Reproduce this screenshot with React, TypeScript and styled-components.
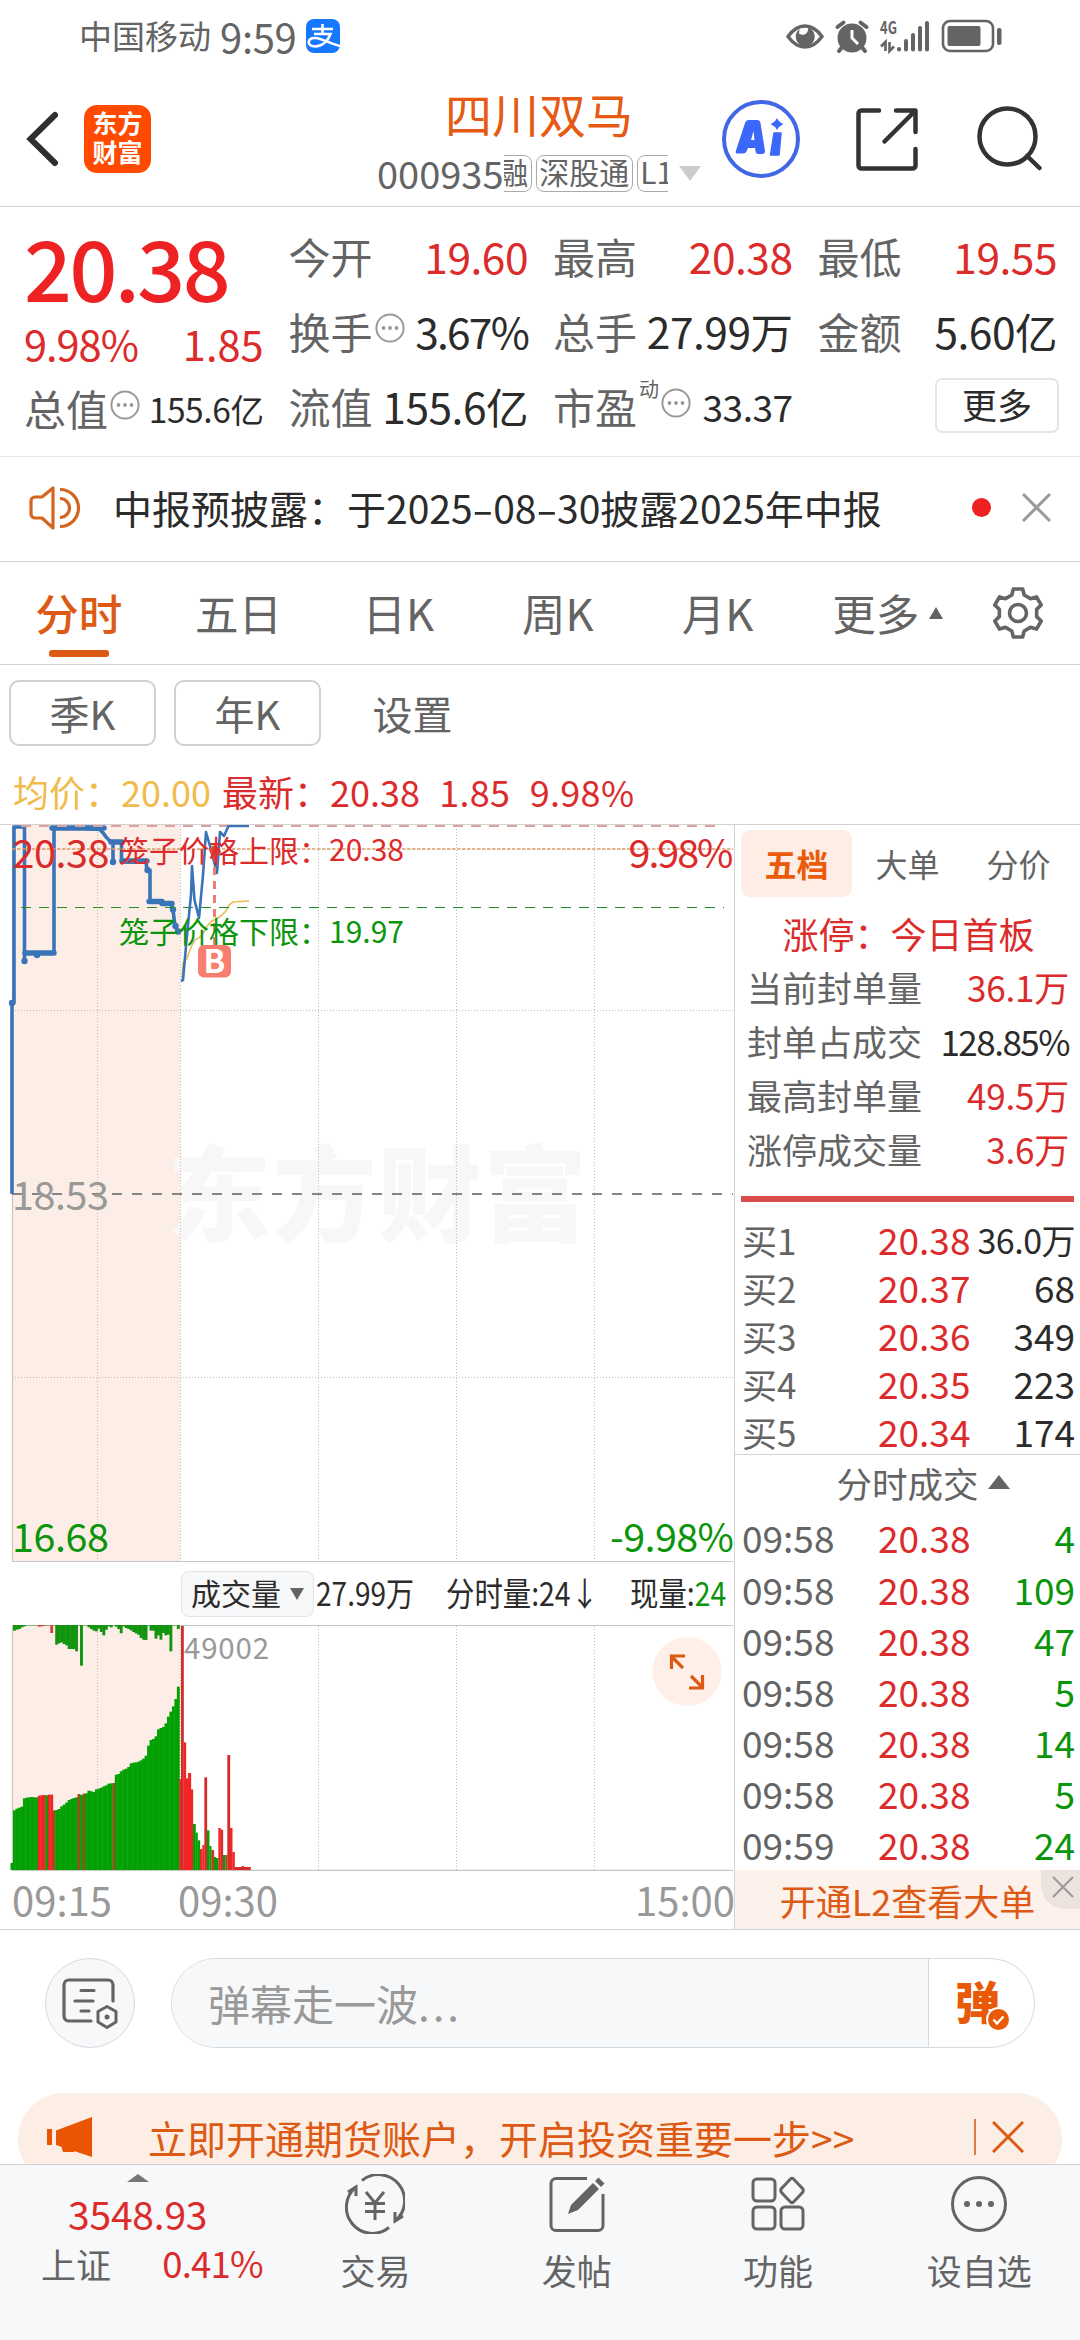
import React from 'react';
import styled, { createGlobalStyle, css } from 'styled-components';

const C = {
  red: '#db2b2b',
  green: '#0a950a',
  orange: '#dc5a14',
  ink: '#2b2b2b',
  grey: '#646464',
  light: '#999999',
  line: '#d2d2d2',
  peach: '#fceee7',
  blue: '#3974b8',
};

const FONT = "'Noto Sans CJK SC', 'Noto Sans', sans-serif";

const GlobalStyle = createGlobalStyle`
  *, *::before, *::after { box-sizing: border-box; }
  html, body { margin: 0; padding: 0; background: #fff; }
  body { font-family: ${FONT}; color: ${C.ink}; width: 1080px; overflow: hidden; }
  svg { display: block; flex: none; }
`;

interface TextProps {
  $size?: number;
  $color?: string;
  $ls?: number;
  $weight?: number;
  $stretch?: number;
}

const Text = styled.span<TextProps>`
  display: inline-block;
  flex: none;
  white-space: pre;
  line-height: 1;
  font-size: ${(p) => p.$size ?? 42}px;
  color: ${(p) => p.$color ?? C.ink};
  font-weight: ${(p) => p.$weight ?? 400};
  letter-spacing: ${(p) => p.$ls ?? 0}px;
  ${(p) =>
    p.$stretch &&
    css`
      transform: scaleX(${p.$stretch});
      transform-origin: left center;
    `}
`;

const Screen = styled.div`
  width: 1080px;
  height: 2340px;
  display: flex;
  flex-direction: column;
  overflow: hidden;
  background: #fff;
`;

/* ---------- status bar ---------- */

const StatusBar = styled.div`
  height: 74px;
  display: flex;
  align-items: center;
  padding: 0 78px 0 79px;
`;
const StatusClock = styled.div`
  display: flex;
  align-items: center;
  gap: 9px;
  flex: 1;
  padding-bottom: 2px;
`;
const PayBadge = styled.div`
  width: 34px;
  height: 34px;
`;
const StatusIcons = styled.div`
  display: flex;
  align-items: center;
  width: 216px;
`;

const PayIcon = () => (
  <svg width="34" height="34" viewBox="0 0 34 34">
    <rect width="34" height="34" rx="8" fill="#1677ff" />
    <path
      d="M6 10h21M16.500 5v10M8 15h16.500C22 22 16 27.500 9 27.500C0 27.500 1 18.500 9 19C17 19.500 23 24.500 34 27"
      stroke="#fff"
      strokeWidth="2.600"
      fill="none"
    />
  </svg>
);

const StatusGlyphs = () => (
  <svg width="216" height="36" viewBox="786 19 216 36">
    <path d="M788 36.500C793 29.500 799 26 805 26s12 3.500 17 10.500C817 43.500 811 47 805 47s-12-3.500-17-10.500z" fill="none" stroke={C.grey} strokeWidth="3.400" />
    <path d="M799.500 29A9.500 9.500 0 1 0 808 27.500C809 33 804 37 799 33.500Z" fill={C.grey} />
    <circle cx="852" cy="38" r="14.500" fill={C.grey} />
    <path d="M837.500 27l6-4.500M866.500 27l-6-4.500M843 46l-4 5M861 46l4 5" stroke={C.grey} strokeWidth="4" strokeLinecap="round" />
    <path d="M852 30v8l6 6" stroke="#fff" strokeWidth="3" fill="none" />
    <text x="880" y="34" fontSize="17.500" fontWeight="700" fill={C.grey} fontFamily={FONT} textLength="17" lengthAdjust="spacingAndGlyphs">4G</text>
    <path d="M885.500 51V42l-4.500 4.500M889.500 42v9l4.500-4.500" stroke={C.grey} strokeWidth="2.600" fill="none" />
    <path d="M899 49v.5M906 41v8.500M913 35v14.500M920 28v21.500M927 23v26.500" stroke={C.grey} strokeWidth="4" strokeLinecap="round" />
    <rect x="943" y="21" width="50" height="30" rx="7" fill="none" stroke={C.grey} strokeWidth="2.600" />
    <rect x="947.500" y="26" width="33" height="20" rx="2" fill={C.grey} />
    <rect x="997" y="28" width="4.500" height="17" rx="2" fill={C.grey} />
  </svg>
);

/* ---------- header ---------- */

const Header = styled.header`
  height: 133px;
  border-bottom: 1.500px solid ${C.line};
  display: flex;
  align-items: flex-start;
  padding-left: 26px;
`;
const AppLogo = styled.div`
  width: 67px;
  height: 68px;
  margin: 31px 0 0 23px;
  border-radius: 13px;
  background: #ff4a00;
  color: #fff;
  display: flex;
  flex-direction: column;
  justify-content: center;
  align-items: center;
  padding-bottom: 3px;
  font-size: 25px;
  font-weight: 700;
  line-height: 29px;
`;
const TitleBlock = styled.div`
  width: 324px;
  margin-left: 226px;
  display: flex;
  flex-direction: column;
  align-items: center;
  padding-top: 15px;
`;
const CodeRow = styled.div`
  display: flex;
  align-items: center;
  width: 324px;
  height: 37px;
  margin-top: 19px;
`;
const ChipScroller = styled.div`
  width: 166px;
  height: 37px;
  display: flex;
  justify-content: center;
  gap: 4px;
  overflow: hidden;
  margin-right: 11px;
`;
const Chip = styled.span`
  flex: none;
  height: 37px;
  border: 1.500px solid #aaa;
  border-radius: 8px;
  padding: 0 2.500px;
  font-size: 30px;
  line-height: 31px;
  color: ${C.grey};
`;
const HeaderIcon = styled.div<{ $ml: number; $mt: number }>`
  margin: ${(p) => p.$mt}px 0 0 ${(p) => p.$ml}px;
`;

/* ---------- quote ---------- */

const Quote = styled.section`
  height: 250px;
  border-bottom: 1.500px solid #e9e9e9;
  display: flex;
  gap: 25px;
  padding: 12px 0 0 24px;
`;
const QuoteCol = styled.div`
  width: 239.500px;
  display: flex;
  flex-direction: column;
`;
const QuoteRow = styled.div<{ $h?: number }>`
  height: ${(p) => p.$h ?? 75}px;
  flex: none;
  display: flex;
  align-items: center;
  justify-content: space-between;
`;
const Key = styled.div`
  display: flex;
  align-items: center;
  gap: 2px;
  font-size: 42px;
  line-height: 1;
  color: ${C.grey};
`;
const Sup = styled.span`
  font-size: 20px;
  align-self: flex-start;
  margin-top: -6px;
`;
const MoreButton = styled.button`
  width: 124px;
  height: 55px;
  margin-right: -2px;
  margin-top: -1px;
  border: 2px solid #e4e6e6;
  border-radius: 7px;
  background: #fff;
  padding: 0 0 4px;
  font: 35px/1 ${FONT};
  color: ${C.ink};
`;

const Dots = () => (
  <svg width="30" height="30" viewBox="0 0 30 30">
    <circle cx="15" cy="15" r="13.600" fill="none" stroke="#999" strokeWidth="2" />
    <circle cx="8.500" cy="15" r="1.900" fill="#999" />
    <circle cx="15" cy="15" r="1.900" fill="#999" />
    <circle cx="21.500" cy="15" r="1.900" fill="#999" />
  </svg>
);
const DotsWrap = styled.span`
  margin-top: -6px;
`;

interface MetricProps {
  label: string;
  value: string;
  up?: boolean;
  info?: boolean;
  sup?: string;
  size?: number;
  tight?: number;
}
const Metric = ({ label, value, up, info, sup, size, tight }: MetricProps) => (
  <QuoteRow>
    <Key>
      {label}
      {sup && <Sup>{sup}</Sup>}
      {info && (
        <DotsWrap>
          <Dots />
        </DotsWrap>
      )}
    </Key>
    <Text $size={size ?? 42.500} $color={up ? C.red : C.ink} $ls={tight ?? -0.5}>
      {value}
    </Text>
  </QuoteRow>
);

/* ---------- news ---------- */

const News = styled.section`
  height: 105px;
  border-bottom: 1.500px solid ${C.line};
  display: flex;
  align-items: center;
  padding: 0 29px 2px 29px;
`;
const NewsText = styled.div`
  flex: 1;
  margin-left: 31px;
  padding-bottom: 1px;
  font-size: 39px;
  line-height: 1;
  white-space: pre;
`;
const Dash = styled.span`
  display: inline-block;
  margin: 0 3.500px;
  transform: scaleX(1.600);
`;
const RedDot = styled.i`
  width: 19px;
  height: 19px;
  border-radius: 50%;
  background: #ee2222;
  margin-right: 31px;
`;

/* ---------- tabs ---------- */

const Tabs = styled.nav`
  height: 104px;
  border-bottom: 1.500px solid ${C.line};
  display: flex;
`;
const Tab = styled.div<{ $on?: boolean; $pad?: number }>`
  width: 159.700px;
  height: 96px;
  padding-left: ${(p) => p.$pad ?? 0}px;
  padding-right: 2px;
  padding-top: 6px;
  display: flex;
  align-items: center;
  justify-content: center;
  position: relative;
  gap: 10px;
  font-size: 43.500px;
  line-height: 1;
  font-weight: ${(p) => (p.$on ? 500 : 400)};
  color: ${(p) => (p.$on ? C.orange : C.grey)};
  ${(p) =>
    p.$on &&
    css`
      &::after {
        content: '';
        position: absolute;
        left: 49px;
        top: 88px;
        width: 60px;
        height: 7px;
        border-radius: 3px;
        background: ${C.orange};
      }
    `}
`;
const GearBox = styled.div`
  flex: 1;
  display: flex;
  justify-content: center;
  padding: 24px 2px 0 0;
`;
const SubTabs = styled.div`
  height: 92px;
  display: flex;
  align-items: flex-start;
  padding: 15px 0 0 9px;
  gap: 18px;
`;
const SubTab = styled.div<{ $plain?: boolean }>`
  width: 147px;
  height: 66px;
  border: 2px solid ${(p) => (p.$plain ? 'transparent' : '#d0d0d0')};
  border-radius: 10px;
  font-size: 40px;
  line-height: 62px;
  text-align: center;
  color: ${C.grey};
`;
const PriceLine = styled.div`
  height: 67px;
  display: flex;
  align-items: center;
  padding: 1px 0 0 13px;
  gap: 11px;
`;

/* ---------- chart ---------- */

const Main = styled.section`
  height: 1107px;
  border-top: 1.500px solid ${C.line};
  border-bottom: 1.500px solid ${C.line};
  display: flex;
`;
const ChartCol = styled.div`
  width: 735px;
  flex: none;
  border-right: 1.500px solid ${C.line};
  display: flex;
  flex-direction: column;
`;
const VolumeHead = styled.div`
  height: 63px;
  display: flex;
  align-items: center;
  padding-left: 181px;
`;
const VolumeSelect = styled.div`
  width: 133px;
  height: 46px;
  flex: none;
  border: 1.500px solid #e2e4e8;
  border-radius: 8px;
  background: #f7f8fa;
  display: flex;
  align-items: center;
  padding: 0 0 3px 9px;
`;
const Slot = styled.div<{ $w: number; $ml?: number }>`
  width: ${(p) => p.$w}px;
  margin-left: ${(p) => p.$ml ?? 0}px;
  flex: none;
  display: flex;
  align-items: center;
  padding-bottom: 2px;
`;
const VolumeTriangle = styled.i`
  margin: 4px 9px 0 auto;
  border: 7px solid transparent;
  border-top: 12px solid ${C.grey};
  border-bottom: 0;
`;
const TimeAxis = styled.div`
  flex: 1;
  display: flex;
  align-items: center;
  padding: 0 3px 0 12px;
`;

const AUCTION_TOPS = [
  577, 572, 569, 566, 541, 539, 538, 537, 538, 538, 533, 532, 531, 532, 530, 530, 577, 576, 573, 565, 560, 554, 546,
  543, 540, 538, 528, 531, 527, 526, 518, 520, 522, 514, 512, 509, 505, 502, 497, 496, 495, 470, 468, 460, 455, 452,
  447, 436, 434, 433, 431, 427, 422, 413, 383, 366, 363, 355, 334, 330, 327, 316, 296, 281, 265, 243, 206,
];
const AUCTION_HANG = [
  38, 35, 33, 28, 25, 22, 22, 22, 22, 22, 26, 25, 24, 22, 22, 45, 22, 80, 76, 73, 78, 82, 93, 93, 93, 100, 22, 143, 22,
  22, 28, 33, 38, 40, 32, 42, 52, 35, 25, 28, 22, 26, 33, 46, 25, 30, 33, 37, 42, 46, 50, 60, 65, 66, 22, 38, 38, 62,
  52, 65, 45, 52, 50, 100, 22, 22, 33,
];
const AUCTION_RED = [10, 11, 12, 14, 15];
const AUCTION_MIXED = [16, 26, 28, 40];
const HOT = '#f12525';
const LEAF = '#03a003';
const MIXED = '#9a4f1d';
const barColor = (i: number) => (AUCTION_RED.includes(i) ? HOT : AUCTION_MIXED.includes(i) ? MIXED : LEAF);

/* left, right, top, colour of each one-minute bar after the open */
const SESSION_BARS: [number, number, number, string][] = [
  [538, 543, 483, HOT],
  [543, 551, 24, '#d52b2b'],
  [551, 558, 373, HOT],
  [558, 564, 481, HOT],
  [564, 573, 465, HOT],
  [573, 579, 514, HOT],
  [579, 587, 618, LEAF],
  [587, 593, 644, LEAF],
  [593, 600, 667, LEAF],
  [600, 607, 693, HOT],
  [607, 613, 681, HOT],
  [613, 621, 478, '#d52b2b'],
  [621, 628, 637, LEAF],
  [628, 634, 684, LEAF],
  [634, 642, 696, '#c03a26'],
  [642, 648, 717, LEAF],
  [648, 655, 720, LEAF],
  [655, 662, 630, HOT],
  [662, 669, 635, '#d52b2b'],
  [669, 676, 711, LEAF],
  [676, 682, 711, MIXED],
  [682, 690, 411, '#d52b2b'],
  [690, 697, 630, HOT],
  [697, 704, 702, HOT],
  [704, 752, 747, '#d52b2b'],
  [725, 731, 744, '#d52b2b'],
];

const GRID_X = [318.5, 456.5, 594.5];

const PriceChart = () => (
  <svg width="734" height="737" viewBox="0 825 734 737" fontFamily={FONT}>
    <rect x="12" y="825" width="168.500" height="737" fill={C.peach} />
    <text x="167" y="1234" fontSize="104" fontWeight="900" fill="#f7f7f7" textLength="420">东方财富</text>
    <g stroke="#bdbdbd" strokeWidth="1" strokeDasharray="1 2" fill="none">
      {[97.5, 180.5, ...GRID_X].map((x) => (
        <path key={x} d={`M${x} 826V1562`} />
      ))}
      <path d="M12 1010.500H733M12 1377.500H733" />
    </g>
    <path d="M12.500 825V1562M12 1561.500H733" stroke="#c6c6c6" strokeWidth="1.200" fill="none" />
    <path d="M12 1194H733" stroke="#858585" strokeWidth="2" strokeDasharray="10 10" />
    <path
      d="M12 1194V1003H14V827H24.500V961M24.500 953H54V828H78L100 829.500L104 834L106 837L111 842H113V862M115 842H121.500V862H146L147 870H150V901H162L164 903L171 904L173 910L175 926L178 931"
      fill="none"
      stroke={C.blue}
      strokeWidth="3.600"
      strokeLinejoin="round"
    />
    <path d="M52 828H104M25 953H54M122 861H147M149 901.500H162M162 903.500H172M111 842H122" stroke={C.blue} strokeWidth="5.500" strokeLinecap="round" />
    <g fill={C.blue}>
      <circle cx="12" cy="1003" r="3.200" />
      <circle cx="24.500" cy="961" r="3.200" />
      <circle cx="37" cy="955" r="3.200" />
      <circle cx="113" cy="862" r="3.200" />
      <circle cx="147.500" cy="870" r="3.200" />
      <circle cx="173" cy="909.500" r="3.200" />
      <circle cx="175.500" cy="926" r="3.200" />
      <circle cx="178" cy="931.500" r="3.200" />
    </g>
    <path d="M182 978L183 963L187 958L190 950L192 945L195 940L200 937L204 932L207 926L212 921L218 918L222 915L226 911L229 905L233 902L249 901" fill="none" stroke="#f0bb55" strokeWidth="1.600" />
    <path d="M21 826H723" stroke="#d9a3a3" strokeWidth="2.200" strokeDasharray="10 8" />
    <path d="M12 849H733" stroke="#dd9a66" strokeWidth="1.500" strokeDasharray="3.500 1.500" />
    <path d="M21 907.500H724" stroke="#219021" strokeWidth="1.200" strokeDasharray="10 8" />
    <path
      d="M181 981L183 980L187 935L191 895L192 866L194.500 900L199 918L203 875L206 832L210 846L217 873L220 832L224 836L228.500 826H249"
      fill="none"
      stroke={C.blue}
      strokeWidth="2.600"
      strokeLinejoin="round"
    />
    <path d="M214.500 867V945" stroke="#ef7f74" strokeWidth="3" strokeDasharray="8 6" />
    <path d="M209 850Q215 841 220 850L214.500 863Z" fill="#e8453c" />
    <g fill={C.red}>
      <text x="12.500" y="867.500" fontSize="39.500" textLength="97">20.38</text>
      <text x="119" y="861.500" fontSize="30">笼子价格上限：</text>
      <text x="329" y="861" fontSize="30" textLength="75">20.38</text>
      <text x="628.500" y="867.500" fontSize="39.500" textLength="105">9.98%</text>
    </g>
    <g fill={C.green}>
      <text x="119" y="942.500" fontSize="30">笼子价格下限：</text>
      <text x="329" y="942.500" fontSize="30" textLength="75">19.97</text>
      <text x="12" y="1552" fontSize="39.500" textLength="97">16.68</text>
      <text x="610" y="1552" fontSize="39.500" textLength="124">-9.98%</text>
    </g>
    <text x="12" y="1210" fontSize="39.500" fill="#999" textLength="97">18.53</text>
    <rect x="198" y="945" width="33" height="32.500" rx="6" fill="#f77f70" />
    <text x="214.500" y="973" fontSize="32" fontWeight="700" fill="#fff" textAnchor="middle">B</text>
  </svg>
);

const VolumeChart = () => (
  <svg width="734" height="246" viewBox="0 1625 734 246" fontFamily={FONT}>
    <rect x="12" y="1625" width="168.500" height="245" fill={C.peach} />
    <g stroke="#bdbdbd" strokeWidth="1" strokeDasharray="1 2">
      {[97.5, 180.5, ...GRID_X].map((x) => (
        <path key={x} d={`M${x} 1626V1870`} />
      ))}
    </g>
    <path d="M12.500 1625V1870M12 1625.500H733M12 1870.300H733" stroke="#c6c6c6" strokeWidth="1.200" fill="none" />
    {AUCTION_TOPS.map((top, i) => (
      <rect key={i} x={13 + i * 2.483} y={1618 + top / 3} width="2.900" height={(756 - top) / 3} fill={barColor(i)} />
    ))}
    {AUCTION_HANG.map((end, i) => (
      <rect
        key={i}
        x={13 + i * 2.483}
        y="1625"
        width="2.900"
        height={(end - 21) / 3}
        fill={AUCTION_RED.includes(i) ? '#d94040' : '#12940f'}
      />
    ))}
    <rect x="10.500" y="1863" width="4" height="7" fill={LEAF} />
    {SESSION_BARS.map(([l, r, top, color]) => (
      <rect key={l} x={l / 3} y={1618 + top / 3} width={(r - l) / 3 + 0.15} height={(756 - top) / 3} fill={color} />
    ))}
    <text x="184" y="1659" fontSize="29.500" fill="#999" textLength="85">49002</text>
    <circle cx="687" cy="1671.500" r="34.500" fill="#fef0e8" />
    <path d="M683 1668L671.500 1656.500M671.500 1669V1656H685M691 1676L702.500 1687.500M702.500 1675V1688H689" fill="none" stroke={C.orange} strokeWidth="3.200" />
  </svg>
);

/* ---------- order book ---------- */

const BookCol = styled.aside`
  flex: 1;
  display: flex;
  flex-direction: column;
  & > * {
    flex: none;
  }
`;
const BookTabs = styled.div`
  display: flex;
  height: 72px;
  padding: 5px 0 0 6px;
`;
const BookTab = styled.div<{ $on?: boolean }>`
  width: 111px;
  height: 67px;
  border-radius: 9px;
  text-align: center;
  font-size: 32px;
  line-height: 66px;
  background: ${(p) => (p.$on ? '#feede5' : 'transparent')};
  color: ${(p) => (p.$on ? '#ea5b0c' : C.grey)};
  font-weight: ${(p) => (p.$on ? 700 : 400)};
`;
const LimitTitle = styled.div`
  height: 62px;
  text-align: center;
  padding-left: 2px;
  font-size: 36px;
  line-height: 73px;
  color: ${C.red};
`;
const StatRow = styled.div`
  height: 54px;
  display: flex;
  justify-content: space-between;
  align-items: center;
  padding: 0 11px 0 12px;
`;
const LimitBar = styled.div`
  height: 6px;
  margin: 20.500px 6px 13px 6px;
  background: #d94c4b;
`;
const BookRow = styled.div<{ $h: number }>`
  height: ${(p) => p.$h}px;
  display: grid;
  grid-template-columns: 136px 96px 1fr;
  align-items: center;
  padding: 2px 5px 0 7px;
  white-space: nowrap;
`;
const Qty = styled.div`
  display: flex;
  justify-content: flex-end;
`;
const TicksTitle = styled.div`
  height: 57px;
  border-top: 1.500px solid ${C.line};
  display: flex;
  align-items: center;
  justify-content: center;
  gap: 9px;
  padding: 0 0 1px 31px;
  font-size: 35.500px;
  line-height: 1;
  color: ${C.grey};
`;
const L2Banner = styled.div`
  margin-top: auto;
  height: 59px;
  background: #fdf1ec;
  position: relative;
  text-align: center;
  font-size: 36px;
  line-height: 60px;
  color: ${C.orange};
`;
const L2Close = styled.div`
  position: absolute;
  right: 0;
  top: 0;
  width: 39px;
  height: 39px;
  border-radius: 0 0 0 24px;
  background: #ece2de;
  display: flex;
  align-items: center;
  justify-content: center;
  padding: 0 0 5px 5px;
`;

const Cross = ({ size, color, w }: { size: number; color: string; w: number }) => (
  <svg width={size} height={size} viewBox={`0 0 ${size} ${size}`}>
    <path d={`M1 1L${size - 1} ${size - 1}M${size - 1} 1L1 ${size - 1}`} stroke={color} strokeWidth={w} />
  </svg>
);

const BUYS = [
  ['买1', '20.38', '36.0万'],
  ['买2', '20.37', '68'],
  ['买3', '20.36', '349'],
  ['买4', '20.35', '223'],
  ['买5', '20.34', '174'],
];
const TICKS = [
  ['09:58', '20.38', '4'],
  ['09:58', '20.38', '109'],
  ['09:58', '20.38', '47'],
  ['09:58', '20.38', '5'],
  ['09:58', '20.38', '14'],
  ['09:58', '20.38', '5'],
  ['09:59', '20.38', '24'],
];
const STATS: [string, string, boolean][] = [
  ['当前封单量', '36.1万', true],
  ['封单占成交', '128.85%', false],
  ['最高封单量', '49.5万', true],
  ['涨停成交量', '3.6万', true],
];

/* ---------- comment bar ---------- */

const CommentBar = styled.section`
  height: 163px;
  display: flex;
  padding: 28px 45px 0 45px;
  gap: 36px;
`;
const RoundButton = styled.div`
  width: 90px;
  height: 90px;
  border-radius: 50%;
  border: 1.500px solid #d6d9dd;
  background: #f7f8fa;
  display: flex;
  align-items: center;
  justify-content: center;
`;
const CommentPill = styled.div`
  flex: 1;
  height: 90px;
  border-radius: 45px;
  border: 1.500px solid #d6d9dd;
  overflow: hidden;
  display: flex;
`;
const CommentInput = styled.div`
  flex: 1;
  background: #f7f8fa;
  border-right: 1.500px solid #d6d9dd;
  padding-left: 36px;
  font-size: 42px;
  line-height: 88px;
  color: ${C.light};
`;
const Ellipsis = styled.span`
  letter-spacing: 3px;
`;
const DanmuButton = styled.div`
  width: 105px;
  display: flex;
  align-items: center;
  justify-content: center;
  position: relative;
  font-size: 45px;
  font-weight: 900;
  line-height: 1;
  color: #e85a08;
  padding: 0 8px 5px 0;
`;
const CheckBadge = styled.div`
  position: absolute;
  left: 57px;
  top: 48px;
`;

/* ---------- promo ---------- */

const PromoWrap = styled.div`
  height: 71px;
  overflow: hidden;
  padding: 0 18px;
`;
const Promo = styled.div`
  height: 92px;
  border-radius: 46px;
  background: #fdeee5;
  display: flex;
  align-items: center;
  padding: 0 38px 4px 29px;
`;
const PromoText = styled.div`
  flex: 1;
  margin-left: 53px;
  font-size: 39px;
  line-height: 1;
  white-space: nowrap;
  color: ${C.orange};
`;
const PromoRule = styled.i`
  width: 2px;
  height: 36px;
  background: #dd7a45;
  margin-right: 16px;
`;

/* ---------- bottom navigation ---------- */

const BottomNav = styled.nav`
  height: 176px;
  background: #f7f8fa;
  border-top: 1.500px solid ${C.line};
  display: flex;
`;
const IndexBox = styled.div`
  width: 275px;
  display: flex;
  flex-direction: column;
  padding-top: 9px;
`;
const IndexArrow = styled.div`
  padding-left: 127px;
`;
const IndexPrice = styled.div`
  padding: 12px 0 0 68px;
  line-height: 0;
`;
const IndexRow = styled.div`
  display: flex;
  padding: 12px 12px 0 41px;
  justify-content: space-between;
  align-items: center;
`;
const NavItem = styled.div`
  width: 201.500px;
  display: flex;
  flex-direction: column;
  align-items: center;
  padding-top: 9px;
  font-size: 35px;
  line-height: 1;
  color: ${C.grey};
  gap: 18px;
`;

const NAV = [
  {
    label: '交易',
    icon: (
      <>
        <path d="M17 6.500A26 26 0 0 1 50 47M44 53.500A26 26 0 0 1 11 13" />
        <path d="M3 18l8-5v9M58 42l-8 5v-9" />
        <path d="M21 18l9 11 9-11M20 29.500h20M20 37.500h20M30 29v17" strokeWidth="3" />
      </>
    ),
  },
  {
    label: '发帖',
    icon: (
      <>
        <path d="M40 4.500H9a5 5 0 0 0-5 5v42a5 5 0 0 0 5 5h42a5 5 0 0 0 5-5V20" />
        <path d="M21 40l3-9L46 9l6 6-21 21z" fill={C.grey} stroke="none" />
        <path d="M48 7l3.500-3.500 6 6L54 13z" fill={C.grey} stroke="none" />
      </>
    ),
  },
  {
    label: '功能',
    icon: (
      <>
        <rect x="5" y="5" width="22" height="22" rx="4" />
        <rect x="5" y="33" width="22" height="22" rx="4" />
        <rect x="33" y="33" width="22" height="22" rx="4" />
        <path d="M42.500 5l-9 9.500q-1.500 2 0 4l9 9.500q1.500 1.300 3 0l9-9.500q1.500-2 0-4l-9-9.500q-1.500-1.300-3 0z" />
      </>
    ),
  },
  {
    label: '设自选',
    icon: (
      <>
        <circle cx="30" cy="30" r="26.500" />
        <circle cx="18" cy="30" r="3" fill={C.grey} stroke="none" />
        <circle cx="30" cy="30" r="3" fill={C.grey} stroke="none" />
        <circle cx="42" cy="30" r="3" fill={C.grey} stroke="none" />
      </>
    ),
  },
];

/* outline of the six-toothed settings gear */
const GEAR = (() => {
  const pts: string[] = [];
  for (let k = 0; k < 6; k++) {
    const base = -90 + k * 60;
    [
      [-11, 24.5],
      [11, 24.5],
      [19, 19],
      [41, 19],
    ].forEach(([a, r]) => {
      const t = ((base + a) * Math.PI) / 180;
      pts.push(`${(27 + r * Math.cos(t)).toFixed(2)},${(27 + r * Math.sin(t)).toFixed(2)}`);
    });
  }
  return pts.join(' ');
})();

export default function App() {
  return (
    <>
      <GlobalStyle />
      <Screen>
        <StatusBar>
          <StatusClock>
            <Text $size={33} $color={C.grey}>中国移动</Text>
            <Text $size={40} $color={C.grey} $ls={-0.3}>9:59</Text>
            <PayBadge>
              <PayIcon />
            </PayBadge>
          </StatusClock>
          <StatusIcons>
            <StatusGlyphs />
          </StatusIcons>
        </StatusBar>

        <Header>
          <HeaderIcon $ml={0} $mt={36}>
            <svg width="35" height="60" viewBox="0 0 35 60">
              <path d="M29 5L4.500 29L29 53" fill="none" stroke="#2f2f2f" strokeWidth="6" strokeLinecap="round" />
            </svg>
          </HeaderIcon>
          <AppLogo>
            <span>东方</span>
            <span>财富</span>
          </AppLogo>
          <TitleBlock>
            <Text $size={47} $color="#e65a14">四川双马</Text>
            <CodeRow>
              <Text $size={38} $color={C.grey}>000935</Text>
              <ChipScroller>
                <Chip>融</Chip>
                <Chip>深股通</Chip>
                <Chip>L1</Chip>
              </ChipScroller>
              <svg width="22" height="15" viewBox="0 0 22 15">
                <path d="M0 0H22L11 15Z" fill="#ccc" />
              </svg>
            </CodeRow>
          </TitleBlock>
          <HeaderIcon $ml={20} $mt={25}>
            <svg width="80" height="80" viewBox="0 0 80 80">
              <circle cx="40" cy="40" r="37" fill="none" stroke="#4167e4" strokeWidth="4" />
              <path
                fillRule="evenodd"
                d="M24 24Q25 21 28 21H36Q39 21 39.500 24L44 52Q44 55 41.500 55H37Q35 55 34.500 52L34 49H27L25.500 52.500Q24.500 54.500 22 54.500H16Q14 54.500 15 51.500ZM30 41H33.500L32.500 32Z"
                fill="#3b68fb"
              />
              <path d="M53 34H60L58 56H49.500Z" fill="#3b68fb" stroke="#3b68fb" strokeWidth="1.500" strokeLinejoin="round" />
              <path d="M56 19Q58 23.500 62.500 25Q58 27 56 31Q54 27 49.500 25Q54 23.500 56 19Z" fill="#3b68fb" />
            </svg>
          </HeaderIcon>
          <HeaderIcon $ml={54} $mt={32}>
            <svg width="66" height="66" viewBox="0 0 66 66" fill="none" stroke="#333" strokeWidth="4.500" strokeLinecap="round" strokeLinejoin="round">
              <path d="M24 4.500H6.500a3 3 0 0 0-3 3V59.500a3 3 0 0 0 3 3H57.500a3 3 0 0 0 3-3V43" />
              <path d="M41 4.500H60.500V26M60 5L29.500 35.500" />
            </svg>
          </HeaderIcon>
          <HeaderIcon $ml={55} $mt={31}>
            <svg width="68" height="68" viewBox="0 0 68 68" fill="none" stroke="#333" strokeWidth="4.500" strokeLinecap="round">
              <circle cx="31.500" cy="31.500" r="28" />
              <path d="M51 51L63.500 63" />
            </svg>
          </HeaderIcon>
        </Header>

        <Quote>
          <QuoteCol>
            <QuoteRow $h={95}>
              <Text $size={84} $weight={500} $color="#ee2222" $ls={-2.5}>20.38</Text>
            </QuoteRow>
            <QuoteRow $h={59}>
              <Text $size={41.5} $color={C.red} $ls={-1}>9.98%</Text>
              <Text $size={41.5} $color={C.red}>1.85</Text>
            </QuoteRow>
            <QuoteRow $h={71}>
              <Key>
                总值
                <DotsWrap>
                  <Dots />
                </DotsWrap>
              </Key>
              <Text $size={33.5} $ls={-0.4}>155.6亿</Text>
            </QuoteRow>
          </QuoteCol>
          <QuoteCol>
            <Metric label="今开" value="19.60" up />
            <Metric label="换手" info value="3.67%" tight={-1.8} />
            <Metric label="流值" value="155.6亿" />
          </QuoteCol>
          <QuoteCol>
            <Metric label="最高" value="20.38" up />
            <Metric label="总手" value="27.99万" />
            <Metric label="市盈" sup="动" info value="33.37" size={37} />
          </QuoteCol>
          <QuoteCol>
            <Metric label="最低" value="19.55" up />
            <Metric label="金额" value="5.60亿" />
            <QuoteRow>
              <span />
              <MoreButton>更多</MoreButton>
            </QuoteRow>
          </QuoteCol>
        </Quote>

        <News>
          <svg width="53" height="46" viewBox="0 0 53 46" fill="none" stroke="#d4651f" strokeWidth="3.200">
            <path d="M24 3V43L13 33H6a4 4 0 0 1-4-4V16a4 4 0 0 1 4-4H13Z" strokeLinejoin="round" />
            <path d="M31 13.500a9.500 9.500 0 0 1 0 19M31 4.500a18.500 18.500 0 0 1 0 37" />
          </svg>
          <NewsText>
            中报预披露：于2025<Dash>-</Dash>08<Dash>-</Dash>30披露2025年中报
          </NewsText>
          <RedDot />
          <Cross size={29} color="#999" w={3} />
        </News>

        <Tabs>
          <Tab $on>分时</Tab>
          <Tab>五日</Tab>
          <Tab>日K</Tab>
          <Tab>周K</Tab>
          <Tab>月K</Tab>
          <Tab $pad={21}>
            更多
            <svg width="14" height="12" viewBox="0 0 14 12">
              <path d="M7 0L14 12H0Z" fill={C.grey} />
            </svg>
          </Tab>
          <GearBox>
            <svg width="54" height="54" viewBox="0 0 54 54" fill="none" stroke={C.grey} strokeWidth="3.600" strokeLinejoin="round">
              <polygon points={GEAR} />
              <circle cx="27" cy="27" r="8.500" />
            </svg>
          </GearBox>
        </Tabs>

        <SubTabs>
          <SubTab>季K</SubTab>
          <SubTab>年K</SubTab>
          <SubTab $plain>设置</SubTab>
        </SubTabs>

        <PriceLine>
          <Text $size={36} $color="#f0bb4a">均价：20.00</Text>
          <Text $size={36} $color={C.red}>最新：20.38</Text>
          <Text $size={36} $color={C.red} $ls={0.3}> 1.85</Text>
          <Text $size={36} $color={C.red} $ls={0.3}> 9.98%</Text>
        </PriceLine>

        <Main>
          <ChartCol>
            <PriceChart />
            <VolumeHead>
              <VolumeSelect>
                <Text $size={30}>成交量</Text>
                <VolumeTriangle />
              </VolumeSelect>
              <Slot $w={130} $ml={2}>
                <Text $size={33} $stretch={0.85}>27.99万</Text>
              </Slot>
              <Slot $w={184}>
                <Text $size={33} $stretch={0.86}>分时量:24↓</Text>
              </Slot>
              <Slot $w={100}>
                <Text $size={33} $stretch={0.86}>
                  现量:<Text $size={33} $color={C.green}>24</Text>
                </Text>
              </Slot>
            </VolumeHead>
            <VolumeChart />
            <TimeAxis>
              <Slot $w={166}>
                <Text $size={40} $color={C.light}>09:15</Text>
              </Slot>
              <Slot $w={457}>
                <Text $size={40} $color={C.light}>09:30</Text>
              </Slot>
              <Slot $w={98}>
                <Text $size={40} $color={C.light}>15:00</Text>
              </Slot>
            </TimeAxis>
          </ChartCol>

          <BookCol>
            <BookTabs>
              <BookTab $on>五档</BookTab>
              <BookTab>大单</BookTab>
              <BookTab>分价</BookTab>
            </BookTabs>
            <LimitTitle>涨停：今日首板</LimitTitle>
            {STATS.map(([label, value, up]) => (
              <StatRow key={label}>
                <Text $size={35} $color={C.grey}>{label}</Text>
                <Text $size={35} $color={up ? C.red : C.ink} $ls={up ? -0.2 : -1.5}>{value}</Text>
              </StatRow>
            ))}
            <LimitBar />
            {BUYS.map(([label, price, qty], i) => (
              <BookRow key={label} $h={47.9}>
                <Text $size={35} $color={C.grey}>{label}</Text>
                <Text $size={37} $color={C.red}>{price}</Text>
                <Qty>
                  <Text $size={i === 0 ? 34 : 37} $ls={i === 0 ? -0.5 : 0}>{qty}</Text>
                </Qty>
              </BookRow>
            ))}
            <TicksTitle>
              分时成交
              <svg width="22" height="15" viewBox="0 0 22 15">
                <path d="M11 0L22 14H0Z" fill={C.grey} />
              </svg>
            </TicksTitle>
            {TICKS.map(([time, price, qty], i) => (
              <BookRow key={i} $h={51.2}>
                <Text $size={37} $color={C.grey}>{time}</Text>
                <Text $size={37} $color={C.red}>{price}</Text>
                <Qty>
                  <Text $size={37} $color={C.green}>{qty}</Text>
                </Qty>
              </BookRow>
            ))}
            <L2Banner>
              开通L2查看大单
              <L2Close>
                <Cross size={22} color="#999" w={2} />
              </L2Close>
            </L2Banner>
          </BookCol>
        </Main>

        <CommentBar>
          <RoundButton>
            <svg width="58" height="56" viewBox="0 0 58 56" fill="none" stroke={C.grey} strokeWidth="3.200" strokeLinecap="round" strokeLinejoin="round">
              <path d="M30 46H8a5 5 0 0 1-5-5V10a5 5 0 0 1 5-5H47a5 5 0 0 1 5 5V26" />
              <path d="M20 15.500H33M14 26H32M20 36H28" />
              <path d="M46 31.500L55 36.500V47L46 52.500L37 47V36.500Z" strokeWidth="3" />
              <circle cx="46" cy="42" r="2.500" fill={C.grey} stroke="none" />
            </svg>
          </RoundButton>
          <CommentPill>
            <CommentInput>
              弹幕走一波<Ellipsis>...</Ellipsis>
            </CommentInput>
            <DanmuButton>
              弹
              <CheckBadge>
                <svg width="25" height="25" viewBox="0 0 25 25">
                  <circle cx="12.500" cy="12.500" r="11.500" fill="#e85a08" stroke="#fff" strokeWidth="2" />
                  <path d="M7.500 12.500l3.500 4 6.500-7" fill="none" stroke="#fff" strokeWidth="2.400" />
                </svg>
              </CheckBadge>
            </DanmuButton>
          </CommentPill>
        </CommentBar>

        <PromoWrap>
          <Promo>
            <svg width="48" height="42" viewBox="0 0 48 42" fill="#ea5504">
              <rect x="0" y="13" width="5" height="16" />
              <path d="M9 14.500L45 1V41L9 29Z" />
              <path d="M14 29L16 36H27L28 33Z" />
            </svg>
            <PromoText>立即开通期货账户，开启投资重要一步&gt;&gt;</PromoText>
            <PromoRule />
            <Cross size={32} color={C.orange} w={3} />
          </Promo>
        </PromoWrap>

        <BottomNav>
          <IndexBox>
            <IndexArrow>
              <svg width="22" height="8" viewBox="0 0 22 8">
                <path d="M11 0L22 8H0Z" fill="#777" />
              </svg>
            </IndexArrow>
            <IndexPrice>
              <Text $size={39} $color={C.red} $ls={-0.2}>3548.93</Text>
            </IndexPrice>
            <IndexRow>
              <Text $size={35} $color={C.grey}>上证</Text>
              <Text $size={36.5} $color={C.red} $ls={-0.8}>0.41%</Text>
            </IndexRow>
          </IndexBox>
          {NAV.map((n) => (
            <NavItem key={n.label}>
              <svg width="60" height="60" viewBox="0 0 60 60" fill="none" stroke={C.grey} strokeWidth="3">
                {n.icon}
              </svg>
              {n.label}
            </NavItem>
          ))}
        </BottomNav>
      </Screen>
    </>
  );
}
